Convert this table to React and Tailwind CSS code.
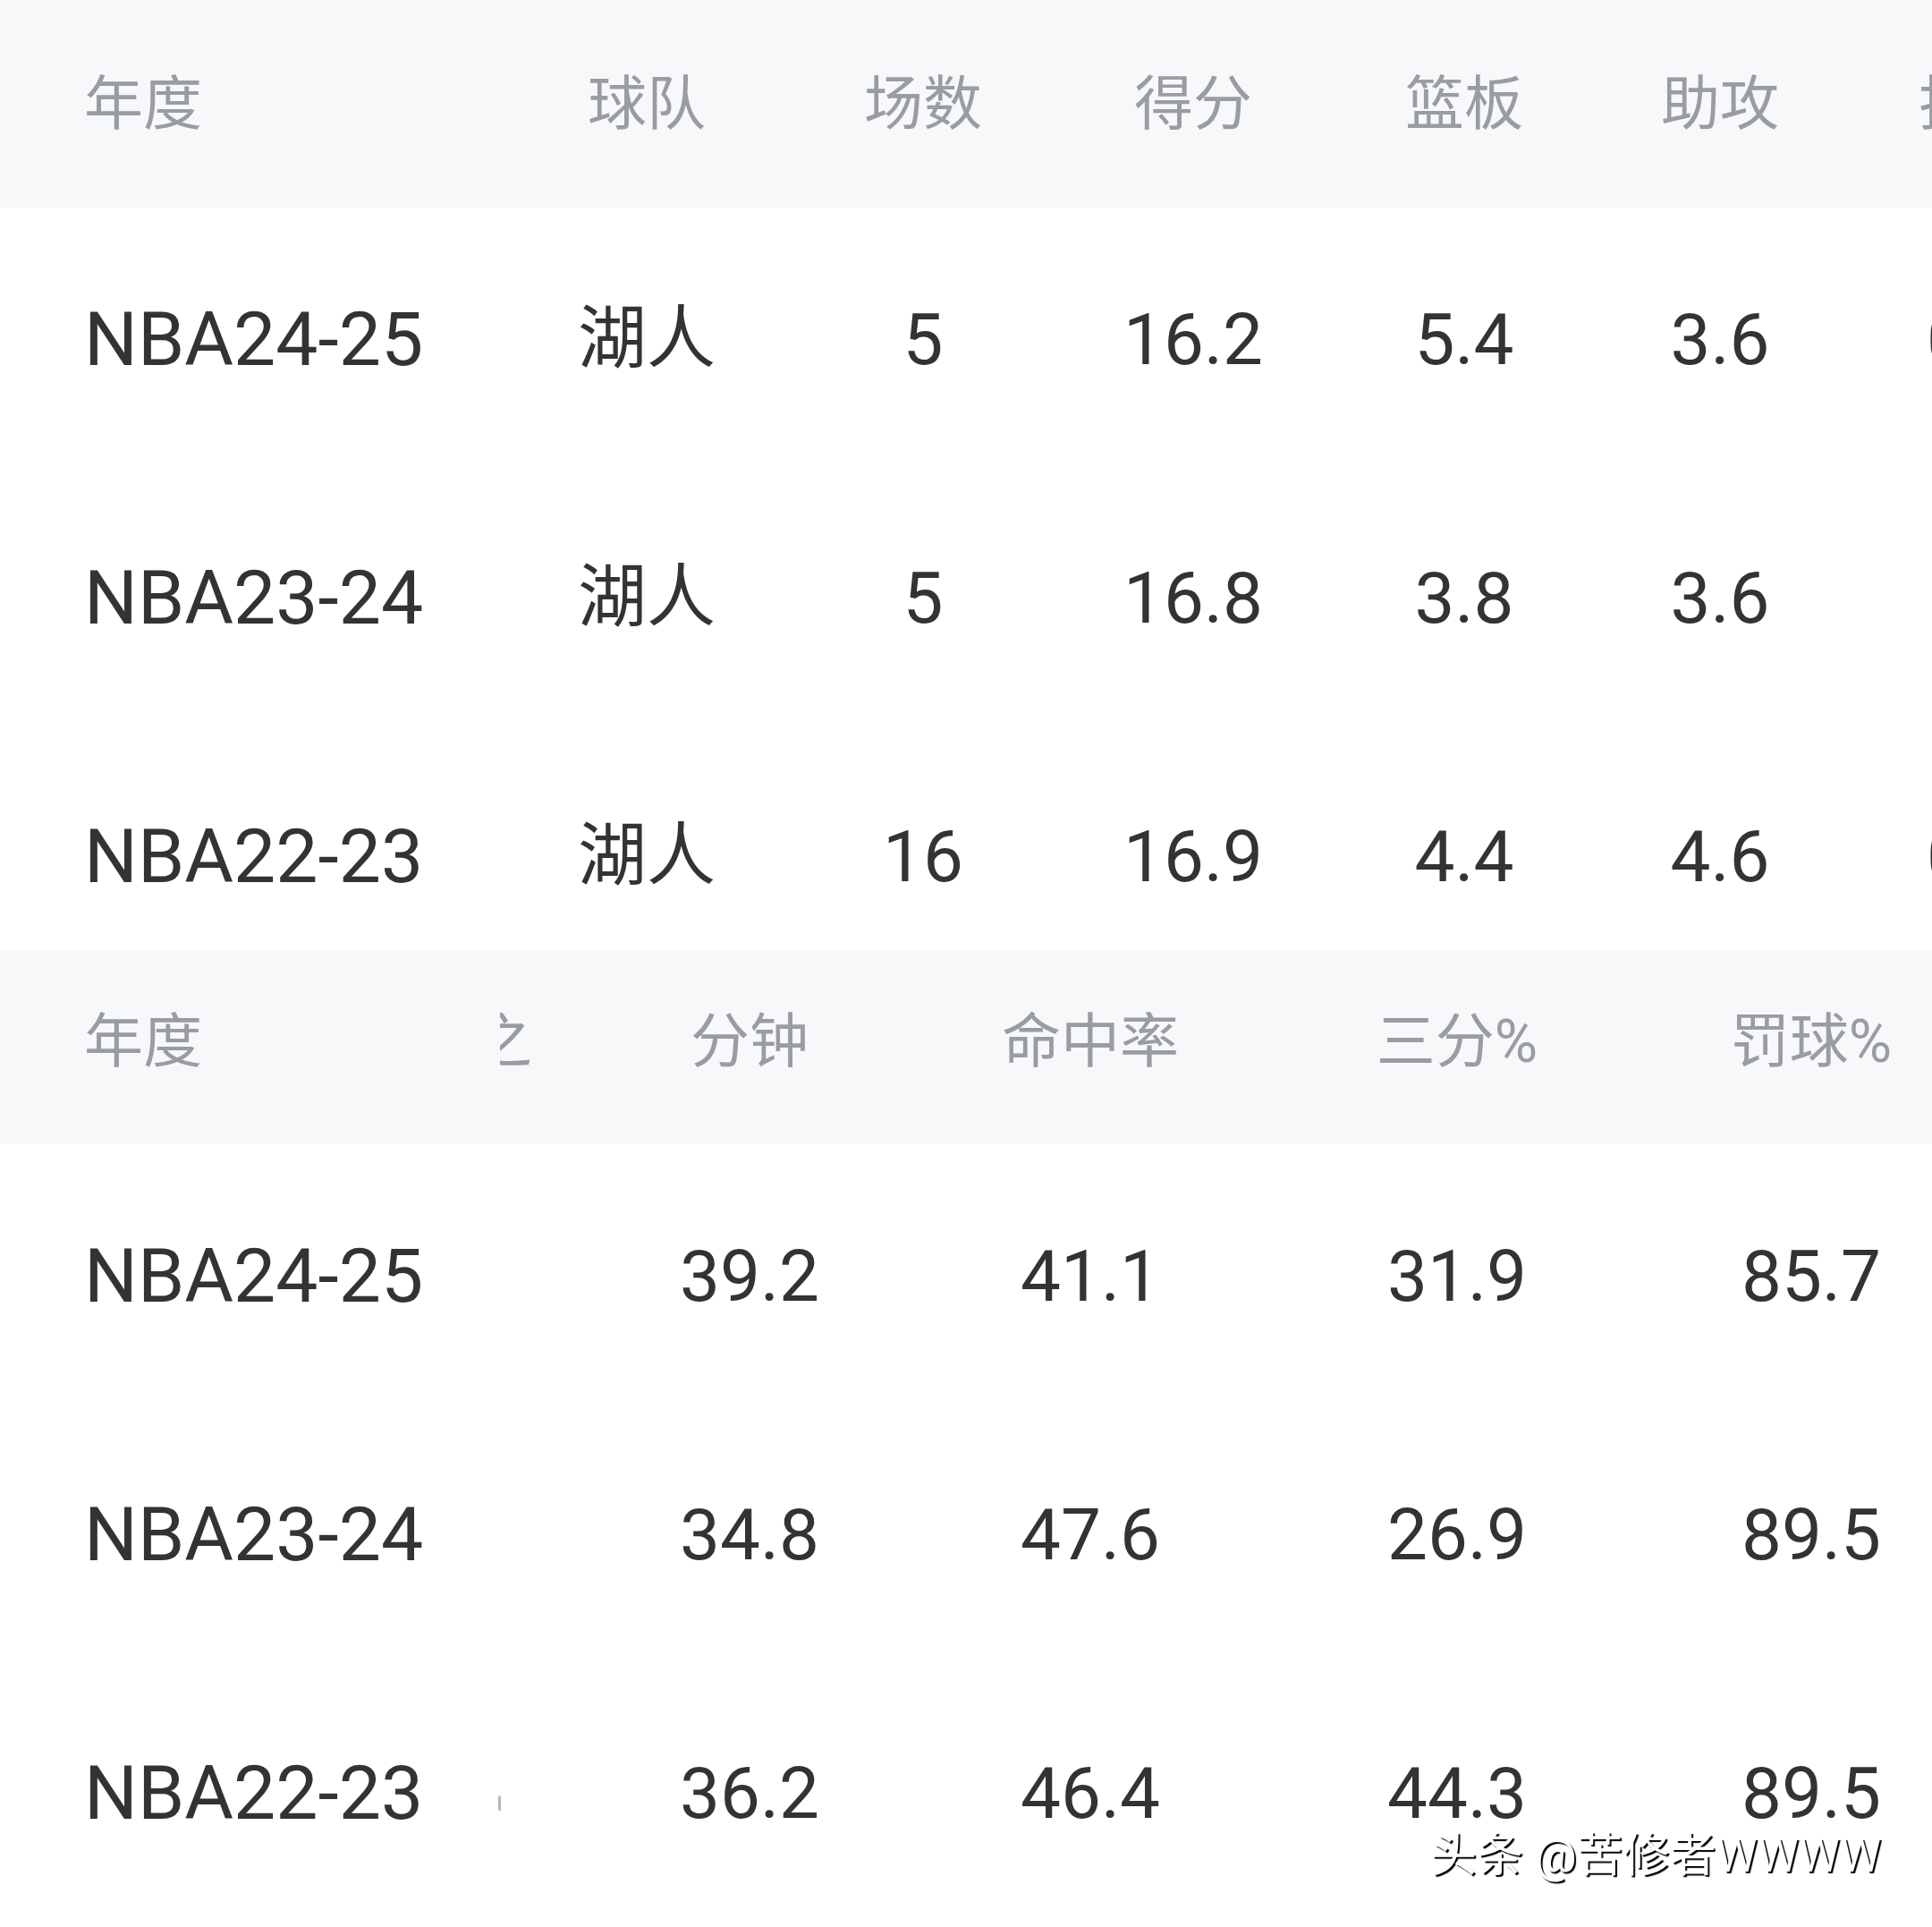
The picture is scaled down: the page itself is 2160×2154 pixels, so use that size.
const HEAD1 = ['年度', '球队', '场数', '得分', '篮板', '助攻', '抢断']

const COLS1 = [
  'w-[600px] justify-start pl-[94px]',
  'w-[246px] justify-center',
  'w-[372px] justify-center',
  'w-[232px] justify-center',
  'w-[374px] justify-center',
  'w-[198px] justify-center',
  'w-[338px] justify-start pl-[123px]',
]

// body cells of the scrolled-off steals column sit a few px further right than its header
const BODY1 = [...COLS1.slice(0, 6), 'w-[338px] justify-start pl-[132px]']

const SIZES1 = [
  'text-[84px]',
  'text-[77px]',
  'text-[80px]',
  'text-[80px]',
  'text-[80px]',
  'text-[80px]',
  'text-[80px]',
]

const ROWS1 = [
  ['NBA24-25', '湖人', '5', '16.2', '5.4', '3.6', '0.6'],
  ['NBA23-24', '湖人', '5', '16.8', '3.8', '3.6', '1.0'],
  ['NBA22-23', '湖人', '16', '16.9', '4.4', '4.6', '0.8'],
]

// second table: sticky year column, a sliver of a hidden column, then shooting stats
const HEAD2 = ['年度', null, '分钟', '命中率', '三分%', '罚球%']

const COLS2 = [
  'w-[540px] justify-start pl-[94px]',
  'w-[60px] justify-start',
  'w-[476px] justify-center',
  'w-[286px] justify-center',
  'w-[534px] justify-center',
  'w-[258px] justify-center',
]

const SIZES2 = ['text-[84px]', 'text-[80px]', 'text-[80px]', 'text-[80px]', 'text-[80px]', 'text-[80px]']

const ROWS2 = [
  ['NBA24-25', null, '39.2', '41.1', '31.9', '85.7'],
  ['NBA23-24', null, '34.8', '47.6', '26.9', '89.5'],
  ['NBA22-23', 'edge', '36.2', '46.4', '44.3', '89.5'],
]

function HiddenColumnEdge({ value }) {
  if (value === 'head') {
    return (
      <div className="ml-[19px] w-[34px] overflow-hidden">
        <span className="ml-[-30px] block whitespace-nowrap">之</span>
      </div>
    )
  }
  if (value === 'edge') {
    return <div className="ml-[17px] mt-[22px] h-[17px] w-[3px] rounded-full bg-[#b8b8b8]" />
  }
  return null
}

export default function App() {
  return (
    <div className="relative h-[2154px] w-[2160px] overflow-hidden bg-white font-['Roboto','Noto_Sans_CJK_SC',sans-serif] leading-none">
      {/* table 1 */}
      <div className="h-[1063px] overflow-hidden">
        <div className="flex h-[232px] items-center bg-[#f7f8fa] pt-[2px] text-[66px] text-[#9a9ca3]">
          {HEAD1.map((h, i) => (
            <div key={i} className={`flex shrink-0 ${COLS1[i]}`}>
              <span className="whitespace-nowrap">{h}</span>
            </div>
          ))}
        </div>
        {ROWS1.map((row, r) => (
          <div key={r} className="flex h-[289px] items-center pt-[6px] text-[#333333]">
            {row.map((v, i) => (
              <div key={i} className={`flex shrink-0 ${BODY1[i]} ${SIZES1[i]}`}>
                <span className="whitespace-nowrap">{v}</span>
              </div>
            ))}
          </div>
        ))}
      </div>

      {/* table 2 */}
      <div>
        <div className="flex h-[216px] items-center bg-[#f7f8fa] pb-[12px] text-[66px] text-[#9a9ca3]">
          {HEAD2.map((h, i) => (
            <div key={i} className={`flex shrink-0 ${COLS2[i]}`}>
              {h === null ? <HiddenColumnEdge value="head" /> : <span className="whitespace-nowrap">{h}</span>}
            </div>
          ))}
        </div>
        {ROWS2.map((row, r) => (
          <div key={r} className="flex h-[289px] items-center pt-[6px] text-[#333333]">
            {row.map((v, i) => (
              <div key={i} className={`flex shrink-0 ${COLS2[i]} ${SIZES2[i]}`}>
                {i === 1 ? <HiddenColumnEdge value={v} /> : <span className="whitespace-nowrap">{v}</span>}
              </div>
            ))}
          </div>
        ))}
      </div>

      {/* watermark */}
      <div className="absolute left-[1599px] top-[2049px] whitespace-nowrap text-[52px] text-white [text-shadow:2px_2px_1px_#000]">
        头条 @苦修者WWWW
      </div>
    </div>
  )
}
